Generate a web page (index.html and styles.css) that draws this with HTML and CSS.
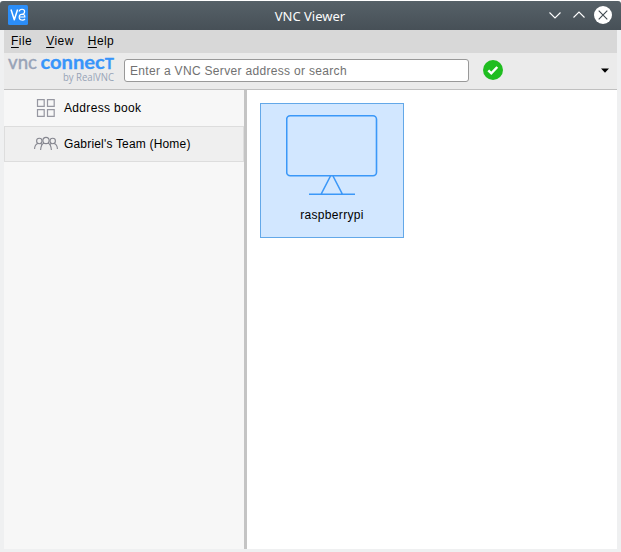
FILE: index.html
```html
<!DOCTYPE html>
<html lang="en">
<head>
<meta charset="utf-8">
<title>VNC Viewer</title>
<link rel="stylesheet" href="styles.css">
</head>
<body>
<div class="window">
  <header class="titlebar">
    <svg class="app-icon" width="20" height="20" viewBox="0 0 20 20" fill="none" stroke="#fff" stroke-width="1.5">
      <rect width="20" height="20" rx="1.5" fill="#2b8df7" stroke="none"/>
      <path d="M3 4.500 6.300 14.800 9.600 4.500" stroke-linejoin="round"/>
      <path d="M11.200 6.500C11.500 3.500 16.600 3.500 16.600 6.500C16.600 8.700 15.500 9.300 13.500 9.300C11.200 9.300 11.200 10.600 11.200 12.300C11.200 15.600 15.500 15.600 17 14M13 9.300C17 9.100 16.800 10.300 16.800 12H12" stroke-width="1.200"/>
    </svg>
    <h1 class="title">VNC Viewer</h1>
    <svg class="controls" width="64" height="20" viewBox="0 0 64 20" fill="none" stroke="#fff" stroke-width="1.1">
      <path d="M1.500 7.500 7 13l5.500-5.500M25.500 12.500 31 7l5.500 5.500"/>
      <circle cx="55" cy="10" r="9" fill="#fff" stroke="none"/>
      <path d="m50.700 5.700 8.600 8.600m0-8.600-8.600 8.600" stroke="#3f484f"/>
    </svg>
  </header>
  <div class="client">
    <nav class="menubar">
      <span><u>F</u>ile</span><span><u>V</u>iew</span><span><u>H</u>elp</span>
    </nav>
    <div class="toolbar">
      <svg class="logo" width="108" height="30" viewBox="0 0 108 30">
        <text class="logo-vnc" x="0" y="13.500" textLength="29" lengthAdjust="spacingAndGlyphs">vnc</text>
        <text class="logo-connect" x="32.500" y="13.500" textLength="73.500" lengthAdjust="spacingAndGlyphs">connec<tspan class="logo-t">T</tspan></text>
        <text class="logo-by" x="55" y="25.500" textLength="51" lengthAdjust="spacingAndGlyphs">by RealVNC</text>
      </svg>
      <div class="search">Enter a VNC Server address or search</div>
      <svg class="status" width="20" height="20" viewBox="0 0 20 20">
        <circle cx="10" cy="10" r="10" fill="#1fbd20"/>
        <path d="m5.300 10.300 3 3 6-6.300" fill="none" stroke="#fff" stroke-width="2.500"/>
      </svg>
      <svg class="dropdown" width="8" height="5" viewBox="0 0 8 5"><path d="M0 .5h8L4 4.700z"/></svg>
    </div>
    <div class="content">
      <aside class="sidebar">
        <div class="item">
          <svg width="24" height="20" viewBox="0 0 24 20" fill="none" stroke="#9697a1" stroke-width="1.200">
            <path d="M3.500 1.600h6.700v6.700H3.500zM13.500 1.600h6.700v6.700h-6.700zM3.500 11.600h6.700v6.700H3.500zM13.500 11.600h6.700v6.700h-6.700z"/>
          </svg>
          <span class="t-book">Address book</span>
        </div>
        <div class="item selected">
          <svg width="24" height="20" viewBox="0 0 24 20" fill="none" stroke="#85868f" stroke-width="1.100">
            <circle cx="5.300" cy="7" r="2.700"/><circle cx="12" cy="6.500" r="3.100"/><circle cx="18.700" cy="7" r="2.700"/>
            <path d="M.6 15c0-3 1.400-5 3.200-5.600M6.800 9.500l1.200 1.100M23.400 15c0-3-1.400-5-3.200-5.600M17.200 9.500 16 10.600M6.600 16c.2-3.500 1.400-6.100 3.500-7M17.400 16c-.2-3.500-1.400-6.100-3.500-7"/>
          </svg>
          <span class="t-team">Gabriel's Team (Home)</span>
        </div>
      </aside>
      <main class="devices">
        <div class="device">
          <svg width="92" height="82" viewBox="0 0 92 82" fill="none" stroke="#3b98f8" stroke-width="1.600">
            <rect x=".7" y="1.700" width="89.800" height="60" rx="3.500"/>
            <path d="M44.500 62 35.200 80M47 62 56.300 80M23 80.300h46"/>
          </svg>
          <span class="t-pi">raspberrypi</span>
        </div>
      </main>
    </div>
  </div>
</div>
</body>
</html>
```
FILE: styles.css
```css
* { box-sizing: border-box; }
body { margin: 0; background: #fff; font: 12px/16px "Liberation Sans", sans-serif; color: #000; }
.window { width: 621px; height: 552px; padding-top: 1px; display: flex; flex-direction: column; }
.titlebar { height: 29px; display: grid; grid-template-columns: 64px 1fr 64px; align-items: center; padding: 0 9px 0 8px; background: linear-gradient(#566168, #475057); border-radius: 3px 3px 0 0; }
.app-icon, .controls { position: relative; top: -1px; }
.title { margin: 0; text-align: center; font: 13px/18px "Noto Sans", sans-serif; color: #fcfcfc; }
.client { flex: 1; display: flex; flex-direction: column; min-height: 0; padding: 0 4px 3px; background: #eff0f1; }
.menubar { height: 23px; display: flex; gap: 14px; padding: 3px 7px 0; background: #d8d8d8; }
.menubar u { text-underline-offset: 2px; text-decoration-thickness: 1px; }
.menubar span { letter-spacing: .45px; }
.toolbar { height: 37px; display: flex; align-items: center; padding: 0 8px 2px 4px; background: #ebebeb; border-bottom: 1px solid #c0c0c0; }
.logo { font-family: Lato, sans-serif; overflow: visible; }
.logo-vnc { font-size: 19px; fill: #98a3b7; stroke: #98a3b7; stroke-width: .4px; }
.logo-connect { font-size: 19px; font-weight: 700; fill: #3895fa; stroke: #3895fa; stroke-width: .3px; }
.logo-t { font-size: 14.5px; }
.logo-by { font: 10px "Open Sans", sans-serif; fill: #98a3b7; }
.search { width: 345px; height: 23px; margin-left: 8px; padding: 3px 5px; border: 1px solid #999; border-radius: 3px; background: #fff; color: #717171; letter-spacing: .32px; white-space: nowrap; }
.status { margin-left: 14px; }
.dropdown { margin-left: auto; }
.content { flex: 1; display: flex; min-height: 0; }
.sidebar { width: 243px; background: #f7f7f7; border-right: 3px solid #c4c4c4; }
.item { height: 36px; display: flex; align-items: center; gap: 6px; padding-left: 29px; border: 1px solid transparent; border-width: 0 1px; }
.item.selected { border: 1px solid #ddd; background: #efefef; }
.t-book { letter-spacing: .34px; }
.t-team { letter-spacing: .18px; }
.devices { flex: 1; padding: 13px; background: #fff; }
.device { width: 144px; height: 135px; padding-top: 10px; display: flex; flex-direction: column; align-items: center; gap: 11px; background: #d2e7ff; border: 1px solid #63a8e8; letter-spacing: .32px; }
```
